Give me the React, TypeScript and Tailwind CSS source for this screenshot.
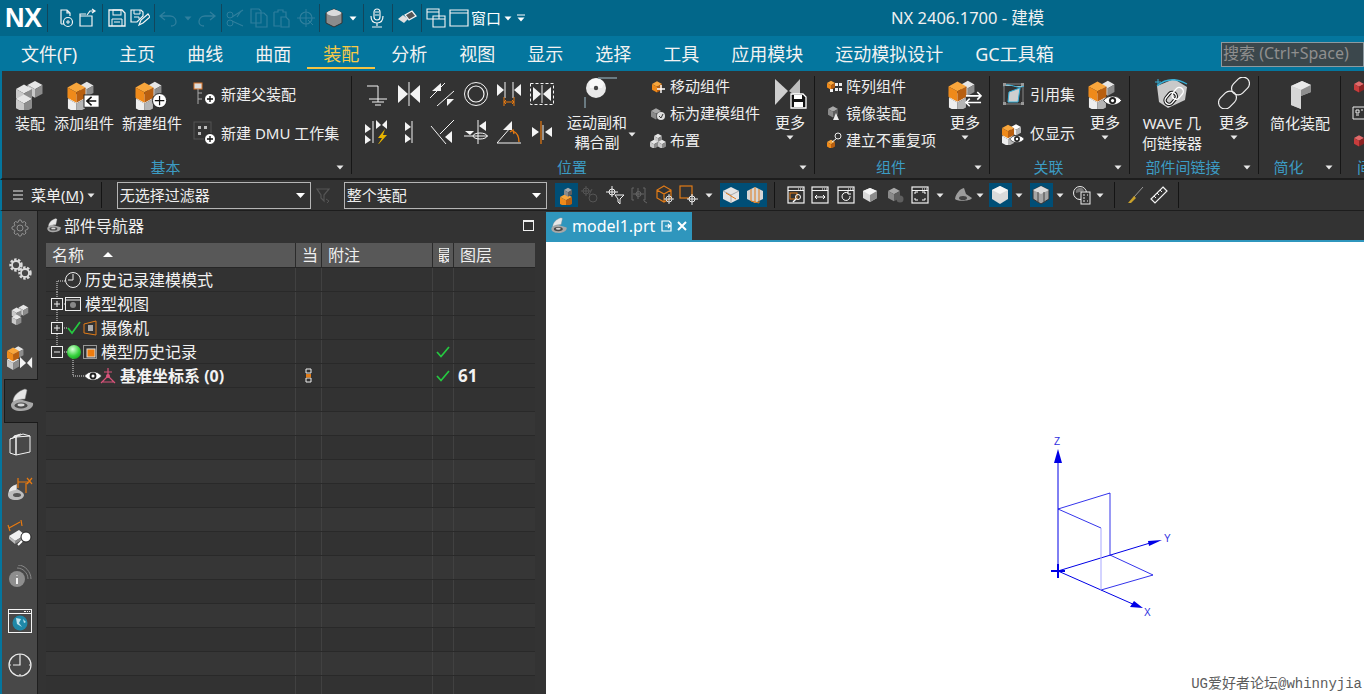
import React from "react";

type P = { children?: React.ReactNode; className?: string };

const V = ({ w = 24, h = 24, vb, children, className }: { w?: number; h?: number; vb?: string; children?: React.ReactNode; className?: string }) => (
  <svg width={w} height={h} viewBox={vb ?? `0 0 ${w} ${h}`} fill="none" className={"shrink-0 " + (className ?? "")}>
    {children}
  </svg>
);

const palettes: Record<string, [string, string, string]> = {
  gray: ["#e6e6e6", "#c9c9c9", "#8c8c8c"],
  dark: ["#a8a8a8", "#8a8a8a", "#5f5f5f"],
  orange: ["#f8a63c", "#ef8a1a", "#b85f10"],
  white: ["#ffffff", "#eeeeee", "#b5b5b5"],
  red: ["#e26a6a", "#c83c3c", "#8c2323"],
};

const Block = ({ x, y, a = 7, c = "gray" }: { x: number; y: number; a?: number; c?: string }) => {
  const b = a * 0.55;
  const h = a * 1.15;
  const [t, l, r] = palettes[c];
  return (
    <g>
      <polygon points={`${x},${y - b} ${x + a},${y} ${x},${y + b} ${x - a},${y}`} fill={t} />
      <polygon points={`${x - a},${y} ${x},${y + b} ${x},${y + b + h} ${x - a},${y + h}`} fill={l} />
      <polygon points={`${x + a},${y} ${x},${y + b} ${x},${y + b + h} ${x + a},${y + h}`} fill={r} />
    </g>
  );
};

const Assembly = ({ s = 32 }: { s?: number }) => (
  <V w={s} h={s} vb="0 0 32 32">
    <Block x={21} y={7} a={7.5} />
    <Block x={10} y={11} a={8} />
    <Block x={10} y={21} a={8} />
  </V>
);

const OrangeStack = ({ children }: { children?: React.ReactNode }) => (
  <V w={34} h={32} vb="0 0 36 32">
    <Block x={21} y={7} a={7} c="gray" />
    <Block x={10} y={21} a={9} c="white" />
    <Block x={10} y={9} a={9.5} c="orange" />
    {children}
  </V>
);

const PlusBadge = ({ x, y, r = 7.5 }: { x: number; y: number; r?: number }) => (
  <g>
    <circle cx={x} cy={y} r={r} fill="#fff" stroke="#222" />
    <path d={`M${x - r + 2.5} ${y}H${x + r - 2.5}M${x} ${y - r + 2.5}V${y + r - 2.5}`} stroke="#111" strokeWidth="1.3" />
  </g>
);

const Eye = ({ x, y, s = 1, fill = "#fff" }: { x: number; y: number; s?: number; fill?: string }) => (
  <g transform={`translate(${x} ${y}) scale(${s})`}>
    <path d="M-9 0C-5-6 5-6 9 0C5 6-5 6-9 0Z" fill={fill} stroke="#222" strokeWidth="0.8" />
    <circle r="3.6" fill="#222" />
    <circle r="1.6" fill={fill} />
  </g>
);

const Caret = ({ c = "#e8e8e8", className }: { c?: string; className?: string }) => (
  <V w={8} h={5} className={className}>
    <path d="M0.5 0.5H7.5L4 4.5Z" fill={c} />
  </V>
);

const TopSep = ({ className }: { className?: string }) => <div className={"w-px h-[28px] bg-[#12465c] shrink-0 " + (className ?? "")} />;

const LW = "#f4f4f4";
const Dim = "#2f7f9d";

const Tri = ({ d, f = LW }: { d: string; f?: string }) => <polygon points={d} fill={f} />;

const Big: React.FC<{ icon: React.ReactNode; lines: string[]; className?: string; caret?: boolean }> = ({ icon, lines, className, caret }) => (
  <div className={"flex flex-col items-center shrink-0 " + (className ?? "pt-[6px]")}>
    <div className="h-[32px] flex items-center justify-center">{icon}</div>
    <div className="mt-[3px] text-center text-[15px] leading-[20px] text-[#efefef] whitespace-nowrap">
      {lines.map((l) => (
        <div key={l}>{l}</div>
      ))}
    </div>
    {caret && <Caret className="mt-[3px]" />}
  </div>
);

const Small: React.FC<{ icon: React.ReactNode; label: string; className?: string }> = ({ icon, label, className }) => (
  <div className={"flex items-center whitespace-nowrap text-[15px] leading-[20px] text-[#efefef] " + (className ?? "")}>
    {icon}
    <span>{label}</span>
  </div>
);

const Group: React.FC<P & { label: string }> = ({ label, className, children }) => (
  <div className={"flex flex-col shrink-0 h-full " + (className ?? "")}>
    <div className="h-[86px] flex">{children}</div>
    <div className="h-[20px] flex items-center">
      <div className="flex-1 text-center text-[15px] leading-[20px] text-[#3c9cc4] whitespace-nowrap">{label}</div>
      <div className="w-[22px] flex justify-center">
        <Caret />
      </div>
    </div>
  </div>
);

const GDiv = () => <div className="w-px h-[98px] mt-[5px] bg-[#161616] shrink-0" />;

const More = ({ icon, className }: { icon: React.ReactNode; className?: string }) => (
  <Big icon={icon} lines={["更多"]} caret className={"w-[44px] pt-[6px] " + (className ?? "")} />
);

const Bow = ({ x, y, s = 1 }: { x: number; y: number; s?: number }) => (
  <g transform={`translate(${x} ${y}) scale(${s})`}>
    <Tri d="-11,-9 -1,0 -11,9" />
    <Tri d="11,-9 1,0 11,9" />
    <path d="M0-12V12" stroke={LW} />
  </g>
);

const Constraint: React.FC<{ i: number }> = ({ i }) => {
  const O = "#e87a10";
  const s = { stroke: LW, strokeWidth: 1 };
  switch (i) {
    case 0:
      return (
        <V>
          <path d="M3 4H14V20M5 17H23M8 20H20M11 23H17" {...s} />
        </V>
      );
    case 1:
      return (
        <V>
          <Bow x={12} y={12} />
        </V>
      );
    case 2:
      return (
        <V>
          <Tri d="2,9 11,1 11,9" />
          <Tri d="17,17 24,17 17,24" />
          <path d="M0 16L15 1M7 24L24 9" {...s} />
        </V>
      );
    case 3:
      return (
        <V>
          <circle cx="12" cy="12" r="11.5" {...s} />
          <circle cx="12" cy="12" r="8" {...s} strokeWidth="1.2" />
        </V>
      );
    case 4:
      return (
        <V>
          <Tri d="0,2 7,8 0,14" />
          <Tri d="24,2 17,8 24,14" />
          <path d="M8 0V16M16 0V16" {...s} />
          <path d="M7 15V24M17 15V24M7 20H17M9 18L7 20L9 22M15 18L17 20L15 22" stroke={O} />
        </V>
      );
    case 5:
      return (
        <V>
          <rect x="0.5" y="1.5" width="23" height="21" stroke={LW} strokeDasharray="3 2" />
          <Tri d="3,5 11,12 3,19" />
          <Tri d="21,5 13,12 21,19" />
          <path d="M12 3V21" {...s} />
        </V>
      );
    case 6:
      return (
        <V>
          <Tri d="1,4 7,9 1,13" />
          <Tri d="1,15 7,20 1,24" />
          <Tri d="12,0 17,5 12,9" />
          <Tri d="23,0 18,5 23,9" />
          <path d="M9 1V23" {...s} />
          <polygon points="21,9 14,18 18,18 13,26 23,15 19,15" fill="#e8b400" />
        </V>
      );
    case 7:
      return (
        <V>
          <Tri d="8,2 14,7 8,11" />
          <Tri d="8,14 14,19 8,23" />
          <path d="M15 1V23" {...s} />
        </V>
      );
    case 8:
      return (
        <V>
          <Tri d="22,11 15,17 22,23" />
          <path d="M1 6L16 24M24 0L10 14" {...s} />
        </V>
      );
    case 9:
      return (
        <V>
          <Tri d="1,11 10,11 6,15" />
          <Tri d="22,1 22,11 15,6" />
          <path d="M0 16H24M14 0V24" {...s} />
          <ellipse cx="16" cy="16" rx="7" ry="3" {...s} />
        </V>
      );
    case 10:
      return (
        <V>
          <path d="M0 23L14 7M0 23H24" {...s} />
          <Tri d="6,10 15,1 15,10" />
          <path d="M16 11C21 13 22 18 22 22M13 12L16 10L17 14" stroke={O} strokeWidth="1.3" />
        </V>
      );
    default:
      return (
        <V>
          <Tri d="2,7 9,12 2,17" />
          <Tri d="22,7 15,12 22,17" />
          <path d="M11 1V24" stroke={O} strokeWidth="1.2" />
          <path d="M13 5V20" {...s} />
        </V>
      );
  }
};

const TBIconWin = ({ children }: { children?: React.ReactNode }) => (
  <V w={18} h={18}>
    <rect x="1" y="1" width="16" height="16" stroke="#f2f2f2" strokeWidth="1.2" />
    <path d="M1 4.5H17" stroke="#f2f2f2" />
    <path d="M11 3H12M13 3H14M15 3H16" stroke="#f2f2f2" />
    {children}
  </V>
);

const Slot: React.FC<P> = ({ children, className }) => (
  <div className={"h-[24px] shrink-0 flex items-center justify-center " + (className ?? "w-[24px]")}>{children}</div>
);

const Toilet = ({ s = 26 }: { s?: number }) => (
  <V w={s} h={s} vb="0 0 26 26">
    <path d="M2 17C2 14 6 12 10 11L24 15C25 19 20 23 12 23C6 23 2 21 2 17Z" fill="#a8a8a8" />
    <path d="M4 14C4 8 9 3 16 1L18 2L16 11C11 11 7 12 4 14Z" fill="#e6e6e6" stroke="#8a8a8a" strokeWidth="0.5" />
    <ellipse cx="12" cy="17.5" rx="6.5" ry="3" fill="#4a4a4a" />
    <ellipse cx="12" cy="17" rx="3.5" ry="1.4" fill="#d8d8d8" />
  </V>
);

const Gear = ({ x, y, r = 5 }: { x: number; y: number; r?: number }) => (
  <g>
    <circle cx={x} cy={y} r={r} stroke="#dcdcdc" strokeWidth="2.4" strokeDasharray="2.4 1.5" />
    <circle cx={x} cy={y} r={r - 1.5} stroke="#dcdcdc" strokeWidth="1.8" />
  </g>
);

const TitleBar = () => (
  <div className="h-[36px] flex items-center bg-[#02678a] shrink-0 text-white">
    <div className="ml-[5px] w-[37px] text-[27px] leading-[30px] font-bold font-['Liberation_Sans',sans-serif] tracking-[-0.5px]">NX</div>
    <TopSep className="ml-[5px]" />
    <V w={20} h={20} className="ml-[8px]">
      <path d="M5 15V2H11L14 5V8M11 2V5H14" stroke={LW} strokeWidth="1.2" />
      <path d="M5 15V16H8" stroke={LW} />
      <circle cx="12" cy="14" r="4.5" stroke={LW} strokeWidth="1.2" />
      <path d="M10 14H14M12 12V16" stroke={LW} />
    </V>
    <V w={20} h={20} className="ml-[1px]">
      <path d="M3 8H15V18H3ZM3 8V6H9" stroke={LW} strokeWidth="1.2" />
      <path d="M10 7L13 3H18M15 1L18 3L15 5" stroke={LW} strokeWidth="1.2" />
    </V>
    <TopSep className="ml-[5px]" />
    <V w={20} h={20} className="ml-[4px]">
      <path d="M2 2H15L18 5V18H2Z" stroke={LW} strokeWidth="1.3" />
      <rect x="6" y="2" width="8" height="5" stroke={LW} />
      <path d="M5 11H15V18M5 11V18M7 14H13" stroke={LW} />
    </V>
    <V w={20} h={20} className="ml-[3px]">
      <path d="M1 2H11L13 4V8L7 14H1Z" stroke={LW} strokeWidth="1.2" />
      <path d="M4 2V6H10V2M4 9H9V11" stroke={LW} />
      <path d="M9 17L11 12L18 6L20 9L13 15Z" stroke={LW} strokeWidth="1.2" />
    </V>
    <TopSep className="ml-[4px]" />
    <V w={20} h={20} className="ml-[3px]">
      <path d="M7 4L2 8L7 12M2 8H12C17 8 18 12 18 14C18 16 16 18 13 18" stroke={Dim} strokeWidth="1.3" />
    </V>
    <Caret c={Dim} className="ml-[6px]" />
    <V w={20} h={20} className="ml-[5px]">
      <path d="M13 4L18 8L13 12M18 8H8C3 8 2 12 2 14C2 16 4 18 7 18" stroke={Dim} strokeWidth="1.3" />
    </V>
    <TopSep className="ml-[4px]" />
    <V w={20} h={20} className="ml-[3px]">
      <circle cx="5" cy="7" r="3" stroke={Dim} />
      <circle cx="5" cy="15" r="3" stroke={Dim} />
      <path d="M7 9L18 2M7 13L18 18M12 9L16 3" stroke={Dim} strokeWidth="1.2" />
    </V>
    <V w={20} h={20} className="ml-[4px]">
      <path d="M2 1H10L12 3V15H2ZM7 5H15L18 8V19H7V5Z" stroke={Dim} strokeWidth="1.2" />
    </V>
    <V w={20} h={20} className="ml-[2px]">
      <path d="M3 4H7V2H12V4H15V9M3 4V18H9" stroke={Dim} strokeWidth="1.2" />
      <path d="M10 9H15L18 12V19H10Z" stroke={Dim} strokeWidth="1.2" />
    </V>
    <V w={20} h={20} className="ml-[5px]">
      <circle cx="10" cy="10" r="6" stroke={Dim} strokeWidth="1.2" />
      <path d="M10 1V19M1 10H19M12 12L17 17" stroke={Dim} />
    </V>
    <TopSep className="ml-[3px]" />
    <V w={20} h={20} className="ml-[4px]">
      <path d="M2 5L10 1L18 5V15L10 19L2 15Z" fill="#8c8c8c" stroke="#333" />
      <path d="M2 5L10 8L18 5L10 1Z" fill="#cfcfcf" />
      <ellipse cx="10" cy="5" rx="7" ry="3" fill="#dcdcdc" />
    </V>
    <Caret c="#fff" className="ml-[5px]" />
    <TopSep className="ml-[6px]" />
    <V w={20} h={20} className="ml-[3px]">
      <rect x="7" y="1" width="6" height="11" rx="3" stroke={LW} strokeWidth="1.2" />
      <path d="M8 4H12M8 7H12" stroke={LW} />
      <path d="M4 8C4 13 7 15 10 15C13 15 16 13 16 8M10 15V18M5 19H15" stroke={LW} strokeWidth="1.2" />
    </V>
    <TopSep className="ml-[5px]" />
    <V w={20} h={20} className="ml-[4px]">
      <path d="M1 11L6 7L11 11L7 15Z" fill="#e0e0e0" />
      <path d="M8 7L15 3L19 8L12 12Z" stroke={LW} strokeWidth="1.3" fill="#555" />
    </V>
    <TopSep className="ml-[4px]" />
    <V w={20} h={20} className="ml-[4px]">
      <path d="M1 1H13V11H1ZM1 4H13M7 8H19V19H7ZM7 11H19" stroke={LW} strokeWidth="1.1" />
    </V>
    <V w={20} h={20} className="ml-[3px]">
      <path d="M1 2H19V18H1ZM1 5H19" stroke={LW} strokeWidth="1.2" />
    </V>
    <span className="ml-[2px] text-[15px] leading-[20px]">窗口</span>
    <Caret c="#fff" className="ml-[3px]" />
    <V w={8} h={8} className="ml-[5px]">
      <path d="M0 1H8" stroke="#fff" />
      <path d="M0.5 3.5H7.5L4 7.5Z" fill="#fff" />
    </V>
    <div className="ml-[366px] text-[16.5px] leading-[20px] whitespace-nowrap text-[#f0f0f0]">NX 2406.1700 - 建模</div>
  </div>
);

const Tab: React.FC<P & { active?: boolean }> = ({ children, active, className }) => (
  <div className={"relative h-full flex items-center justify-center text-[18px] leading-[24px] whitespace-nowrap shrink-0 " + (active ? "text-[#f7c948] " : "text-[#f2f2f2] ") + (className ?? "")}>
    {children}
    {active && <div className="absolute left-0 right-0 bottom-[2px] h-[2px] bg-[#f5c342]" />}
  </div>
);

const TabBar = () => (
  <div className="h-[35px] flex items-center bg-[#04769e] shrink-0">
    <Tab className="ml-[21px]">文件(F)</Tab>
    <Tab className="ml-[42px]">主页</Tab>
    <Tab className="ml-[32px]">曲线</Tab>
    <Tab className="ml-[32px]">曲面</Tab>
    <Tab active className="ml-[16px] w-[68px]">装配</Tab>
    <Tab className="ml-[16px]">分析</Tab>
    <Tab className="ml-[32px]">视图</Tab>
    <Tab className="ml-[32px]">显示</Tab>
    <Tab className="ml-[32px]">选择</Tab>
    <Tab className="ml-[32px]">工具</Tab>
    <Tab className="ml-[32px]">应用模块</Tab>
    <Tab className="ml-[32px]">运动模拟设计</Tab>
    <Tab className="ml-[32px]">GC工具箱</Tab>
    <div className="ml-auto w-[143px] h-[25px] mt-[1px] border border-[#8d9aa0] bg-[#3b474c] text-[#8f8f8f] text-[16px] leading-[21px] pl-[1px] whitespace-nowrap overflow-hidden">搜索 (Ctrl+Space)</div>
  </div>
);

const Ribbon = () => (
  <div className="h-[109px] border-l-2 border-b-2 border-l-[#04769e] border-b-[#1d1d1d] bg-[#333333] flex shrink-0">
    <Group label="基本" className="w-[349px]">
      <Big className="w-[44px] ml-[6px] pt-[7px]" icon={<Assembly />} lines={["装配"]} />
      <Big
        className="w-[60px] ml-[2px] pt-[7px]"
        icon={
          <OrangeStack>
            <rect x="18" y="17" width="16" height="13" fill="#fff" stroke="#222" />
            <path d="M31 23.5H22M26 19L21 23.5L26 28" stroke="#111" strokeWidth="1.6" />
          </OrangeStack>
        }
        lines={["添加组件"]}
      />
      <Big
        className="w-[60px] ml-[8px] pt-[7px]"
        icon={
          <OrangeStack>
            <PlusBadge x={26} y={23} />
          </OrangeStack>
        }
        lines={["新建组件"]}
      />
      <div className="ml-[11px] pt-[11px] flex flex-col gap-[15px]">
        <Small
          className="h-[24px] gap-[5px]"
          icon={
            <V w={23} h={24}>
              <rect x="1" y="1" width="8" height="6" fill="#ddd" stroke="#d8742a" />
              <path d="M5 7V22M5 11H9M5 17H9" stroke="#aaa" />
              <PlusBadge x={17} y={17} r={5.5} />
            </V>
          }
          label="新建父装配"
        />
        <Small
          className="h-[24px] gap-[5px]"
          icon={
            <V w={23} h={24}>
              <rect x="1" y="1" width="17" height="17" stroke="#555" />
              <path d="M5 5H8V8H5ZM11 5H14V8H11ZM5 11H8V14H5Z" fill="#bbb" />
              <PlusBadge x={17} y={18} r={5.5} />
            </V>
          }
          label="新建 DMU 工作集"
        />
      </div>
    </Group>
    <GDiv />
    <Group label="位置" className="w-[462px]">
      <div className="ml-[7px] w-[200px] pt-[4px] grid grid-cols-6 grid-rows-[38px_38px] shrink-0">
        {[0, 1, 2, 3, 4, 5, 6, 7, 8, 9, 10, 11].map((i) => (
          <div key={i} className="flex items-center justify-center">
            <Constraint i={i} />
          </div>
        ))}
      </div>
      <Big
        className="w-[60px] ml-[8px] pt-[6px]"
        icon={
          <V w={40} h={32}>
            <circle cx="19" cy="11" r="10" fill="#e9e9e9" />
            <path d="M12 5A9 9 0 0 1 27 6L25 11H13Z" fill="#f8f8f8" />
            <circle cx="19" cy="11" r="2.2" fill="#444" />
            <path d="M8 31V20M21 1H40" stroke="#7d929c" strokeWidth="1.5" />
          </V>
        }
        lines={["运动副和", "耦合副"]}
      />
      <Caret className="ml-[1px] mt-[61px]" />
      <div className="ml-[14px] w-[118px] pt-[1px] flex flex-col shrink-0">
        <Small
          className="h-[27px] gap-[4px]"
          icon={
            <V w={16} h={16}>
              <Block x={7} y={6} a={5} c="orange" />
              <path d="M11 7V15M7 11H15" stroke="#fff" strokeWidth="1.4" />
            </V>
          }
          label="移动组件"
        />
        <Small
          className="h-[27px] gap-[4px]"
          icon={
            <V w={16} h={16}>
              <Block x={6} y={6} a={5} c="dark" />
              <circle cx="11" cy="11" r="4" fill="#ddd" />
              <path d="M9 11L11 13L13 9" stroke="#333" />
            </V>
          }
          label="标为建模组件"
        />
        <Small
          className="h-[27px] gap-[4px]"
          icon={
            <V w={16} h={16}>
              <Block x={8} y={4} a={4} />
              <Block x={4} y={10} a={4} />
              <Block x={12} y={10} a={4} />
            </V>
          }
          label="布置"
        />
      </div>
      <More
        icon={
          <V w={34} h={32}>
            <path d="M2 2L15 14L2 28Z" fill="#cfcfcf" />
            <path d="M27 2L16 14L27 22Z" fill="#bdbdbd" />
            <path d="M18 17H30L33 20V31H18Z" fill="#111" stroke="#fff" strokeWidth="1.3" />
            <path d="M21 18H29V22H21ZM21 25H30V30H21Z" fill="#fff" />
          </V>
        }
      />
    </Group>
    <GDiv />
    <Group label="组件" className="w-[174px]">
      <div className="ml-[11px] w-[117px] pt-[1px] flex flex-col shrink-0">
        <Small
          className="h-[27px] gap-[4px]"
          icon={
            <V w={16} h={16}>
              <Block x={5} y={5} a={4} c="orange" />
              <path d="M9 5H12V8H9ZM13 5H16V8H13ZM9 10H12V13H9ZM13 10H16V13H13ZM4 11H7V14H4Z" fill="#eee" />
            </V>
          }
          label="阵列组件"
        />
        <Small
          className="h-[27px] gap-[4px]"
          icon={
            <V w={16} h={16}>
              <Block x={7} y={4} a={5} c="dark" />
              <path d="M7 15L10 8L13 15Z" fill="#eee" />
            </V>
          }
          label="镜像装配"
        />
        <Small
          className="h-[27px] gap-[4px]"
          icon={
            <V w={16} h={16}>
              <Block x={5} y={10} a={4} c="orange" />
              <circle cx="12" cy="4" r="3" stroke="#eee" />
              <path d="M10 7L6 10" stroke="#eee" />
            </V>
          }
          label="建立不重复项"
        />
      </div>
      <More
        icon={
          <OrangeStack>
            <path d="M19 19H35M31 15L35 19L31 23M35 26H19M23 22L19 26L23 30" stroke="#fff" strokeWidth="1.7" />
          </OrangeStack>
        }
      />
    </Group>
    <GDiv />
    <Group label="关联" className="w-[139px]">
      <div className="ml-[12px] w-[81px] pt-[11px] flex flex-col gap-[15px] shrink-0">
        <Small
          className="h-[24px] gap-[5px]"
          icon={
            <V w={23} h={24}>
              <rect x="2" y="2" width="19" height="20" stroke="#888" />
              <path d="M1 4C8 0 15 8 22 4M7 10L18 6L16 20H6Z" stroke="#37b0d8" fill="#cfcfcf" />
              <path d="M1 1H4V4H1ZM19 1H22V4H19ZM1 20H4V23H1ZM19 20H22V23H19Z" fill="#999" />
            </V>
          }
          label="引用集"
        />
        <Small
          className="h-[24px] gap-[5px]"
          icon={
            <V w={23} h={24} vb="0 0 23 24">
              <Block x={14} y={6} a={5} c="white" />
              <Block x={6} y={15} a={6} c="white" />
              <Block x={6} y={7} a={6} c="orange" />
              <Eye x={15} y={18} s={0.8} />
            </V>
          }
          label="仅显示"
        />
      </div>
      <More
        icon={
          <OrangeStack>
            <Eye x={26} y={24} s={1.05} />
          </OrangeStack>
        }
      />
    </Group>
    <GDiv />
    <Group label="部件间链接" className="w-[128px]">
      <Big
        className="w-[70px] ml-[7px] pt-[7px]"
        icon={
          <V w={36} h={32}>
            <path d="M3 8L20 1L33 9L31 22L14 30L5 24Z" fill="#c9c9c9" />
            <path d="M3 8C12 0 22 0 33 6" stroke="#37b0d8" strokeWidth="1.3" />
            <path d="M1 4H7M4 1V7" stroke="#37b0d8" />
            <rect x="13" y="14" width="8" height="13" rx="4" transform="rotate(40 17 20)" stroke="#111" strokeWidth="3.4" />
            <rect x="13" y="14" width="8" height="13" rx="4" transform="rotate(40 17 20)" stroke="#fff" strokeWidth="1.4" />
            <rect x="20" y="9" width="8" height="13" rx="4" transform="rotate(40 24 15)" stroke="#fff" strokeWidth="1.4" />
          </V>
        }
        lines={["WAVE 几", "何链接器"]}
      />
      <More
        className="ml-[5px]"
        icon={
          <V w={32} h={32}>
            <rect x="3" y="13" width="13" height="20" rx="6.5" transform="rotate(45 9.5 23)" stroke="#efefef" strokeWidth="1.2" />
            <rect x="16" y="-1" width="13" height="20" rx="6.5" transform="rotate(45 22.5 9)" stroke="#efefef" strokeWidth="1.2" />
          </V>
        }
      />
    </Group>
    <GDiv />
    <Group label="简化" className="w-[81px]">
      <Big
        className="w-[70px] ml-[6px] pt-[7px]"
        icon={
          <V w={24} h={32}>
            <path d="M3 8L14 3L23 7V14L13 18V31L3 27Z" fill="#bfbfbf" />
            <path d="M3 8L14 3L23 7L13 12Z" fill="#e8e8e8" />
            <path d="M13 12V31L3 27V8Z" fill="#d6d6d6" />
            <path d="M13 12L23 7V14L13 18Z" fill="#8e8e8e" />
          </V>
        }
        lines={["简化装配"]}
      />
    </Group>
    <GDiv />
    <div className="flex-1 min-w-0 overflow-hidden flex flex-col pl-[11px]">
      <div className="h-[86px] pt-[1px] flex flex-col shrink-0">
        <div className="h-[27px] flex items-center">
          <V w={16} h={16}>
            <Block x={7} y={6} a={5} c="red" />
          </V>
        </div>
        <div className="h-[27px] flex items-center">
          <V w={16} h={16}>
            <path d="M1 2H13V14H1ZM4 5H7V8H4ZM4 10H7M9 5H11" stroke="#eee" />
          </V>
        </div>
        <div className="h-[27px] flex items-center">
          <V w={16} h={16}>
            <Block x={7} y={6} a={5} c="red" />
          </V>
        </div>
      </div>
      <div className="h-[20px] pl-[5px] flex items-center text-[15px] leading-[20px] text-[#3c9cc4] whitespace-nowrap">间</div>
    </div>
  </div>
);

const Combo: React.FC<P & { w: string }> = ({ children, w }) => (
  <div className={"h-[27px] border border-[#b5b5b5] flex items-center pl-[2px] pr-[5px] justify-between text-[15px] leading-[20px] text-[#efefef] " + w}>
    <span>{children}</span>
    <V w={9} h={5}>
      <path d="M0 0H9L4.5 5Z" fill="#fff" />
    </V>
  </div>
);

const ToolSep = ({ className }: { className?: string }) => <div className={"w-px h-[26px] bg-[#141414] shrink-0 " + (className ?? "")} />;
const BlueBg = "bg-[#004e76]";

const Toolbar = () => (
  <div className="h-[31px] border-l-2 border-b border-l-[#04769e] border-b-[#1d1d1d] bg-[#333333] flex items-center shrink-0">
    <V w={10} h={10} className="ml-[11px]">
      <path d="M0 1H10M0 5H10M0 9H10" stroke="#eee" />
    </V>
    <span className="ml-[8px] text-[15px] leading-[20px] text-[#efefef] whitespace-nowrap">
      菜单(<span className="underline">M</span>)
    </span>
    <Caret className="ml-[3px]" />
    <ToolSep className="ml-[6px]" />
    <div className="ml-[15px]">
      <Combo w="w-[194px]">无选择过滤器</Combo>
    </div>
    <V w={18} h={18} className="ml-[4px]">
      <path d="M2 3H14L9 9V15L6 12V9Z" stroke="#555" strokeWidth="1.2" />
      <path d="M11 13L14 15L12 17" stroke="#555" />
    </V>
    <div className="ml-[11px]">
      <Combo w="w-[203px]">整个装配</Combo>
    </div>
    <Slot className={"w-[23px] ml-[8px] " + BlueBg}>
      <V w={16} h={20}>
        <Block x={8} y={12} a={6} c="orange" />
        <Block x={10} y={5} a={4} c="dark" />
      </V>
    </Slot>
    <Slot>
      <V w={18} h={18}>
        <circle cx="5" cy="5" r="3" stroke="#555" />
        <circle cx="12" cy="12" r="4" stroke="#555" />
        <path d="M5 0V10M0 5H10M8 9L11 3" stroke="#555" />
      </V>
    </Slot>
    <Slot className="w-[24px] ml-[1px]">
      <V w={18} h={18}>
        <path d="M6 0V11M0 6H12" stroke="#f2f2f2" />
        <circle cx="6" cy="6" r="3" stroke="#f2f2f2" />
        <path d="M9 9H18L14 13V18L12 16V13Z" stroke="#f2f2f2" />
      </V>
    </Slot>
    <Slot className="w-[24px] ml-[1px]">
      <V w={18} h={18}>
        <path d="M3 2H1V14H3M12 2H14V14H12M7 2V13M2 8H13" stroke="#666" />
        <circle cx="7.5" cy="8" r="2.5" stroke="#666" />
        <path d="M13 15L16 17" stroke="#666" />
      </V>
    </Slot>
    <Slot className="w-[24px] ml-[1px]">
      <V w={20} h={20}>
        <path d="M9 1L16 5V13L9 17L2 13V5ZM2 5L9 9L16 5M9 9V17" stroke="#e07b17" strokeWidth="1.2" />
        <circle cx="14" cy="14" r="3" stroke="#ddd" />
        <path d="M14 9V19M9 14H19" stroke="#ddd" />
      </V>
    </Slot>
    <Slot>
      <V w={20} h={20}>
        <rect x="1" y="1" width="12" height="12" stroke="#e07b17" strokeWidth="1.2" />
        <circle cx="13" cy="14" r="3" stroke="#eee" fill="#333" />
        <path d="M13 9V20M8 14H19" stroke="#eee" />
      </V>
    </Slot>
    <Slot className="w-[16px]">
      <Caret />
    </Slot>
    <Slot className={"w-[23px] ml-[3px] " + BlueBg}>
      <V w={18} h={18}>
        <path d="M9 1L17 5V13L9 17L1 13V5Z" fill="#e4e4e4" />
        <path d="M1 5L9 9L17 5M9 9V17" stroke="#aaa" />
        <path d="M4 7L14 13" stroke="#e07b17" />
      </V>
    </Slot>
    <Slot className={"w-[24px] " + BlueBg}>
      <V w={18} h={18}>
        <path d="M9 1L17 5V13L9 17L1 13V5Z" fill="#d6d6d6" />
        <path d="M9 1V17M5 3V15L13 17V3" stroke="#e07b17" />
      </V>
    </Slot>
    <ToolSep className="ml-[7px]" />
    <Slot className="w-[24px] ml-[9px]">
      <TBIconWin>
        <rect x="3" y="7" width="7" height="6" stroke="#e07b17" />
        <circle cx="11" cy="11" r="2.5" stroke="#fff" />
        <path d="M9 13L6 16" stroke="#fff" strokeWidth="1.5" />
      </TBIconWin>
    </Slot>
    <Slot>
      <TBIconWin>
        <path d="M4 11H14M6 9L4 11L6 13M12 9L14 11L12 13" stroke="#fff" />
      </TBIconWin>
    </Slot>
    <Slot className="w-[24px] ml-[2px]">
      <TBIconWin>
        <path d="M13 10A4 4 0 1 1 11 7M11 5V8H14" stroke="#fff" />
      </TBIconWin>
    </Slot>
    <Slot>
      <V w={16} h={16}>
        <path d="M8 1L15 4V11L8 15L1 11V4Z" fill="#d8d8d8" />
        <path d="M1 4L8 8L15 4L8 1Z" fill="#f4f4f4" />
        <path d="M8 8V15L15 11V4Z" fill="#8c8c8c" />
      </V>
    </Slot>
    <Slot className="w-[24px] ml-[2px]">
      <V w={18} h={18}>
        <Block x={7} y={5} a={6} c="dark" />
        <circle cx="13" cy="13" r="3.5" fill="#5f5f5f" />
      </V>
    </Slot>
    <Slot>
      <TBIconWin>
        <path d="M4 8V6H7M14 8V6H11M4 12V14H7M14 12V14H11" stroke="#fff" />
      </TBIconWin>
    </Slot>
    <Slot className="w-[16px]">
      <Caret />
    </Slot>
    <Slot className="w-[24px] ml-[3px]">
      <V w={20} h={20}>
        <path d="M2 14C3 8 7 4 11 3L13 9L19 13C18 16 4 17 2 14Z" fill="#9c9c9c" />
        <ellipse cx="10" cy="13" rx="4" ry="2" fill="#444" />
      </V>
    </Slot>
    <Slot className="w-[10px]">
      <Caret />
    </Slot>
    <Slot className={"w-[23px] ml-[4px] " + BlueBg}>
      <V w={20} h={20}>
        <path d="M10 1L18 5V14L10 19L2 14V5Z" fill="#dadada" />
        <path d="M2 5L10 9L18 5L10 1Z" fill="#f5f5f5" />
      </V>
    </Slot>
    <Slot className="w-[14px]">
      <Caret />
    </Slot>
    <Slot className={"w-[23px] ml-[4px] " + BlueBg}>
      <V w={20} h={20}>
        <path d="M10 1L18 5V14L10 19L2 14V5Z" fill="#a5a5a5" stroke="#333" />
        <path d="M2 5L10 9L18 5L10 1Z" fill="#dcdcdc" />
        <path d="M7 7V18M13 7V18" stroke="#444" />
      </V>
    </Slot>
    <Slot className="w-[14px]">
      <Caret />
    </Slot>
    <Slot className="w-[24px] ml-[3px]">
      <V w={20} h={20}>
        <circle cx="8" cy="8" r="6.5" stroke="#eee" />
        <path d="M4 8A4 4 0 0 1 12 6" fill="#777" />
        <rect x="9" y="7" width="9" height="12" fill="#333" stroke="#eee" />
        <path d="M11 10H13M15 10H16M11 13H13M11 16H13M15 16H16" stroke="#eee" />
      </V>
    </Slot>
    <Slot className="w-[12px]">
      <Caret />
    </Slot>
    <ToolSep className="ml-[8px]" />
    <Slot className="w-[24px] ml-[8px]">
      <V w={18} h={18}>
        <path d="M17 1L8 11" stroke="#999" />
        <path d="M8 10L10 12L5 17L2 17Z" fill="#caa12a" />
      </V>
    </Slot>
    <Slot>
      <V w={18} h={18}>
        <path d="M13 1L17 5L5 17L1 13Z" stroke="#f2f2f2" strokeWidth="1.2" />
        <path d="M10 4L12 6M7 7L9 9M4 10L6 12" stroke="#f2f2f2" />
      </V>
    </Slot>
    <ToolSep className="ml-[7px]" />
  </div>
);

const RailItem: React.FC<P & { active?: boolean }> = ({ children, active, className }) => (
  <div
    className={
      "shrink-0 flex items-center justify-center " +
      (active ? "ml-[2px] w-[34px] bg-[#333333] border-l border-t border-b border-[#1a1a1a] relative z-10 " : "w-[35px] ") +
      (className ?? "h-[44px]")
    }
  >
    {children}
  </div>
);

const Rail = () => (
  <div className="w-[46px] shrink-0 h-full border-l-2 border-[#04769e] flex bg-[#333333]">
    <div className="w-[36px] h-full bg-[#484848] border-r border-[#1f1f1f] flex flex-col">
      <RailItem className="h-[36px] pb-[2px]">
        <V w={18} h={18}>
          <circle cx="9" cy="9" r="3" stroke="#8f8f8f" />
          <path d="M8 1H10L11 3.5L13.5 2.5L15 4L14 6.5L17 8V10L14 11.5L15 14L13.5 15.5L11 14.5L10 17H8L7 14.5L4.5 15.5L3 14L4 11.5L1 10V8L4 6.5L3 4L4.5 2.5L7 3.5Z" stroke="#8f8f8f" />
        </V>
      </RailItem>
      <RailItem>
        <V w={24} h={24}>
          <Gear x={8} y={8} r={5.5} />
          <Gear x={17} y={16} r={5.5} />
        </V>
      </RailItem>
      <RailItem>
        <V w={22} h={24} vb="0 0 32 32">
          <Block x={21} y={8} />
          <Block x={11} y={12} />
          <Block x={11} y={22} />
        </V>
      </RailItem>
      <RailItem>
        <V w={28} h={26} vb="0 0 32 30">
          <Block x={14} y={6} a={6} />
          <Block x={8} y={18} a={7} />
          <Block x={8} y={8} a={7} c="orange" />
          <Tri d="16,15 23,22 16,28" />
          <Tri d="30,15 24,22 30,28" />
        </V>
      </RailItem>
      <RailItem active className="h-[44px]">
        <Toilet />
      </RailItem>
      <RailItem>
        <V w={22} h={24}>
          <path d="M1 6L7 4V22L1 20ZM7 22L21 19V3L7 4M1 6L14 1L21 3M5 3L12 1" stroke="#f2f2f2" strokeWidth="1" />
          <path d="M4 4L10 2M7 4V22" stroke="#f2f2f2" />
        </V>
      </RailItem>
      <RailItem>
        <V w={26} h={26}>
          <path d="M1 19C1 14 5 10 10 8V13C14 15 17 17 17 19C17 22 13 24 9 24C4 24 1 22 1 19Z" fill="#bdbdbd" />
          <path d="M2 16C2 12 6 9 9 9V14C6 14 4 15 2 16Z" fill="#eaeaea" />
          <ellipse cx="10" cy="19" rx="4" ry="2" fill="#555" />
          <path d="M11 2V12M11 6H24M20 2L25 8M25 2L20 8M19 7V17" stroke="#e87a10" strokeWidth="1.2" />
        </V>
      </RailItem>
      <RailItem>
        <V w={26} h={26}>
          <path d="M2 8L13 2M1 5L3 11M14 0L15 6" stroke="#e87a10" strokeWidth="1.2" />
          <path d="M2 16L12 10L18 15L8 21Z" fill="#f0f0f0" />
          <path d="M2 16L8 21V24L2 19Z" fill="#bbb" />
          <path d="M8 21L18 15V18L8 24Z" fill="#888" />
          <circle cx="19" cy="17" r="5" fill="#fff" stroke="#222" />
          <path d="M15 21L11 25" stroke="#fff" strokeWidth="2" />
        </V>
      </RailItem>
      <RailItem>
        <V w={24} h={24}>
          <circle cx="9" cy="14" r="8" fill="#8e8e8e" />
          <path d="M9 10V10.5M9 13V19" stroke="#fff" strokeWidth="1.8" />
          <path d="M9 3C15 3 20 8 20 14M10 0C17 0 23 7 23 14" stroke="#888" />
        </V>
      </RailItem>
      <RailItem>
        <V w={24} h={24}>
          <rect x="0.5" y="0.5" width="23" height="23" stroke="#f5f5f5" />
          <path d="M0 4.5H24M16 2.5H18M19 2.5H20M21 2.5H22" stroke="#f5f5f5" />
          <circle cx="12" cy="14" r="7.5" fill="#1f88a8" />
          <path d="M8 9L13 10L11 14L14 18L9 15ZM15 10L18 13L16 14Z" fill="#bfe4ee" />
        </V>
      </RailItem>
      <RailItem>
        <V w={24} h={24}>
          <circle cx="12" cy="12" r="11" stroke="#ececec" strokeWidth="1.2" />
          <path d="M12 2V12H5M12 1V3M12 21V23M1 12H3M21 12H23" stroke="#ececec" strokeWidth="1.2" />
        </V>
      </RailItem>
    </div>
  </div>
);

const HCell: React.FC<P> = ({ children, className }) => (
  <div className={"h-full border-r border-[#2b2b2b] text-[16px] leading-[24px] text-[#efefef] overflow-hidden whitespace-nowrap shrink-0 " + (className ?? "")}>{children}</div>
);

const TreeBox = ({ minus }: { minus?: boolean }) => (
  <>
    <rect x="5.5" y="6.5" width="11" height="11" fill="#333" stroke="#eee" />
    <path d={minus ? "M8 12H14" : "M8 12H14M11 9V15"} stroke="#eee" />
  </>
);

const dot = { stroke: "#e0e0e0", strokeDasharray: "1 1" };

const Check = () => (
  <V w={14} h={12}>
    <path d="M1 6L5 10.5L13 1" stroke="#25c940" strokeWidth="1.7" />
  </V>
);

const Row: React.FC<{ tree?: React.ReactNode; text?: string; bold?: boolean; cur?: React.ReactNode; chk?: boolean; layer?: string; alt?: boolean }> = ({ tree, text, bold, cur, chk, layer, alt }) => (
  <div className={"h-[24px] flex border-b border-[#292929] shrink-0 " + (alt ? "bg-[#363636]" : "bg-[#323232]")}>
    <div className={"w-[250px] h-full flex items-center border-r border-[#414141] shrink-0 text-[16px] leading-[22px] whitespace-nowrap text-[#f2f2f2] " + (bold ? "font-bold" : "")}>
      {tree}
      <span className="pt-[1px]">{text}</span>
    </div>
    <div className="w-[26px] h-full border-r border-[#414141] flex items-center justify-center shrink-0">{cur}</div>
    <div className="w-[111px] h-full border-r border-[#414141] shrink-0" />
    <div className="w-[21px] h-full border-r border-[#414141] flex items-center justify-center shrink-0">{chk && <Check />}</div>
    <div className="flex-1 h-full pl-[4px] text-[17px] leading-[24px] font-bold text-[#f2f2f2]">{layer}</div>
  </div>
);

const Navigator = () => {
  const empties = Array.from({ length: 13 }, (_, i) => i);
  return (
    <div className="w-[500px] shrink-0 h-full flex flex-col bg-[#333333] overflow-hidden">
      <div className="h-[32px] flex items-center shrink-0 pr-[12px] pb-[3px]">
        <Toilet s={16} />
        <span className="ml-[2px] text-[16px] leading-[20px] text-[#efefef]">部件导航器</span>
        <div className="ml-auto w-[11px] h-[11px] border border-[#f0f0f0] border-t-2" />
      </div>
      <div className="w-[489px] flex-1 flex flex-col min-h-0">
        <div className="h-[25px] flex bg-[#585858] border-b border-[#262626] shrink-0">
          <HCell className="w-[250px] flex items-center pl-[6px]">
            名称
            <V w={10} h={6} className="ml-[19px]">
              <path d="M5 0L10 5H0Z" fill="#fff" />
            </V>
          </HCell>
          <HCell className="w-[26px] pl-[6px]">当</HCell>
          <HCell className="w-[111px] pl-[6px]">附注</HCell>
          <HCell className="w-[21px] pl-[6px]">
            <div className="w-[10px] overflow-hidden">
              <div className="-ml-[3px]">最</div>
            </div>
          </HCell>
          <HCell className="flex-1 border-r-0 pl-[6px]">图层</HCell>
        </div>
        <Row
          text="历史记录建模模式"
          tree={
            <V w={39} h={24}>
              <path d="M11 24V13H19" {...dot} />
              <circle cx="27" cy="12" r="7.5" stroke="#eee" />
              <path d="M27 6V12H22" stroke="#eee" />
            </V>
          }
        />
        <Row
          text="模型视图"
          tree={
            <V w={39} h={24}>
              <path d="M11 0V24M16 12H19" {...dot} />
              <TreeBox />
              <rect x="19.5" y="5.5" width="15" height="13" stroke="#eee" />
              <path d="M20 8H34" stroke="#eee" />
              <circle cx="27" cy="13" r="3" fill="#888" />
            </V>
          }
        />
        <Row
          text="摄像机"
          tree={
            <V w={55} h={24}>
              <path d="M11 0V24M16 12H21" {...dot} />
              <TreeBox />
              <path d="M22 12L26 17L34 6" stroke="#25c940" strokeWidth="1.7" />
              <path d="M38 8L50 5V19L38 17Z" stroke="#e07b17" />
              <rect x="42" y="9" width="5" height="6" fill="#aaa" />
            </V>
          }
        />
        <Row
          text="模型历史记录"
          chk
          tree={
            <V w={55} h={24}>
              <path d="M11 0V6M16 12H21M27 18V24" {...dot} />
              <TreeBox minus />
              <defs>
                <radialGradient id="g" cx="0.4" cy="0.3" r="0.8">
                  <stop offset="0" stopColor="#d8ffd8" />
                  <stop offset="0.6" stopColor="#37d23e" />
                  <stop offset="1" stopColor="#139a1c" />
                </radialGradient>
              </defs>
              <circle cx="28" cy="12" r="7" fill="url(#g)" />
              <rect x="37.5" y="5.5" width="13" height="13" stroke="#999" />
              <rect x="41" y="9" width="8" height="8" fill="#ee7c0e" stroke="#ddd" />
            </V>
          }
        />
        <Row
          text="基准坐标系 (0)"
          bold
          chk
          layer="61"
          cur={
            <V w={8} h={15}>
              <path d="M1 1H6V5H1ZM1 10H6V14H1Z" stroke="#eee" />
              <rect x="1" y="6" width="5" height="3.5" fill="#e07b17" />
            </V>
          }
          tree={
            <V w={74} h={24}>
              <path d="M27 0V12H38" {...dot} />
              <Eye x={47} y={12} s={0.95} />
              <path d="M62 4V12L55 19M62 12L69 19M56 18H68M58 8L66 8" stroke="#d8537a" strokeWidth="1.2" />
              <circle cx="62" cy="12" r="2" fill="#d8537a" />
            </V>
          }
        />
        {empties.map((i) => (
          <Row key={i} alt={i % 2 === 1} />
        ))}
      </div>
    </div>
  );
};

const Triad = () => {
  const B = "#0000e6";
  const labelClass = "font-['Liberation_Sans',sans-serif]";
  return (
    <svg className="absolute left-[494px] top-[188px]" width="140" height="190" viewBox="1040 430 140 190" fill="none">
      <path d="M1058 571V455M1058 571L1135 605M1058 571L1150 543" stroke={B} />
      <path d="M1051 571H1065M1058 564V578" stroke={B} strokeWidth="2" />
      <polygon points="1058,449 1054,463 1062,463" fill={B} />
      <polygon points="1143,608 1130,607 1134,601" fill={B} />
      <polygon points="1162,540 1148,541 1149,546" fill={B} />
      <path d="M1058 509L1110 493V555L1153 575L1101 590" stroke={B} strokeWidth="0.8" />
      <path d="M1058 509L1101 528" stroke={B} strokeWidth="0.8" />
      <path d="M1101 528V590" stroke="#a8a8ff" />
      <text x="1054" y="445" fontSize="10" fill="#3030e0" className={labelClass}>Z</text>
      <text x="1144" y="616" fontSize="10" fill="#3030e0" className={labelClass}>X</text>
      <text x="1164" y="542" fontSize="10" fill="#3030e0" className={labelClass}>Y</text>
    </svg>
  );
};

const Doc = () => (
  <div className="flex-1 min-w-0 h-full flex flex-col bg-[#333333]">
    <div className="h-[29px] flex shrink-0 pt-[1px]">
      <div className="w-[146px] h-[28px] bg-[#2f96bd] flex items-center pl-[4px] text-white">
        <Toilet s={18} />
        <span className="ml-[4px] text-[16px] leading-[24px] font-['Noto_Sans',sans-serif] whitespace-nowrap">model1.prt</span>
        <V w={11} h={12} className="ml-[6px]">
          <path d="M1 1H8L10 3V11H1ZM4 6H9M7 4L9 6L7 8" stroke="#fff" strokeWidth="1.2" />
        </V>
        <V w={10} h={10} className="ml-[5px]">
          <path d="M1 1L9 9M9 1L1 9" stroke="#fff" strokeWidth="2" />
        </V>
      </div>
    </div>
    <div className="h-[2px] bg-[#2f96bd] shrink-0" />
    <div className="relative flex-1 min-h-0 bg-white overflow-hidden">
      <Triad />
      <div className="absolute right-[2px] bottom-[2px] text-[14px] leading-[16px] text-[#5c5c5c] whitespace-nowrap font-['Liberation_Mono','Noto_Sans_CJK_SC',monospace]">UG爱好者论坛@whinnyjia</div>
    </div>
  </div>
);

export default function App() {
  return (
    <div className="w-[1364px] h-[694px] overflow-hidden flex flex-col bg-[#333333] font-['Noto_Sans','Noto_Sans_CJK_SC',sans-serif]">
      <TitleBar />
      <TabBar />
      <Ribbon />
      <Toolbar />
      <div className="flex-1 min-h-0 flex">
        <Rail />
        <Navigator />
        <Doc />
      </div>
    </div>
  );
}
